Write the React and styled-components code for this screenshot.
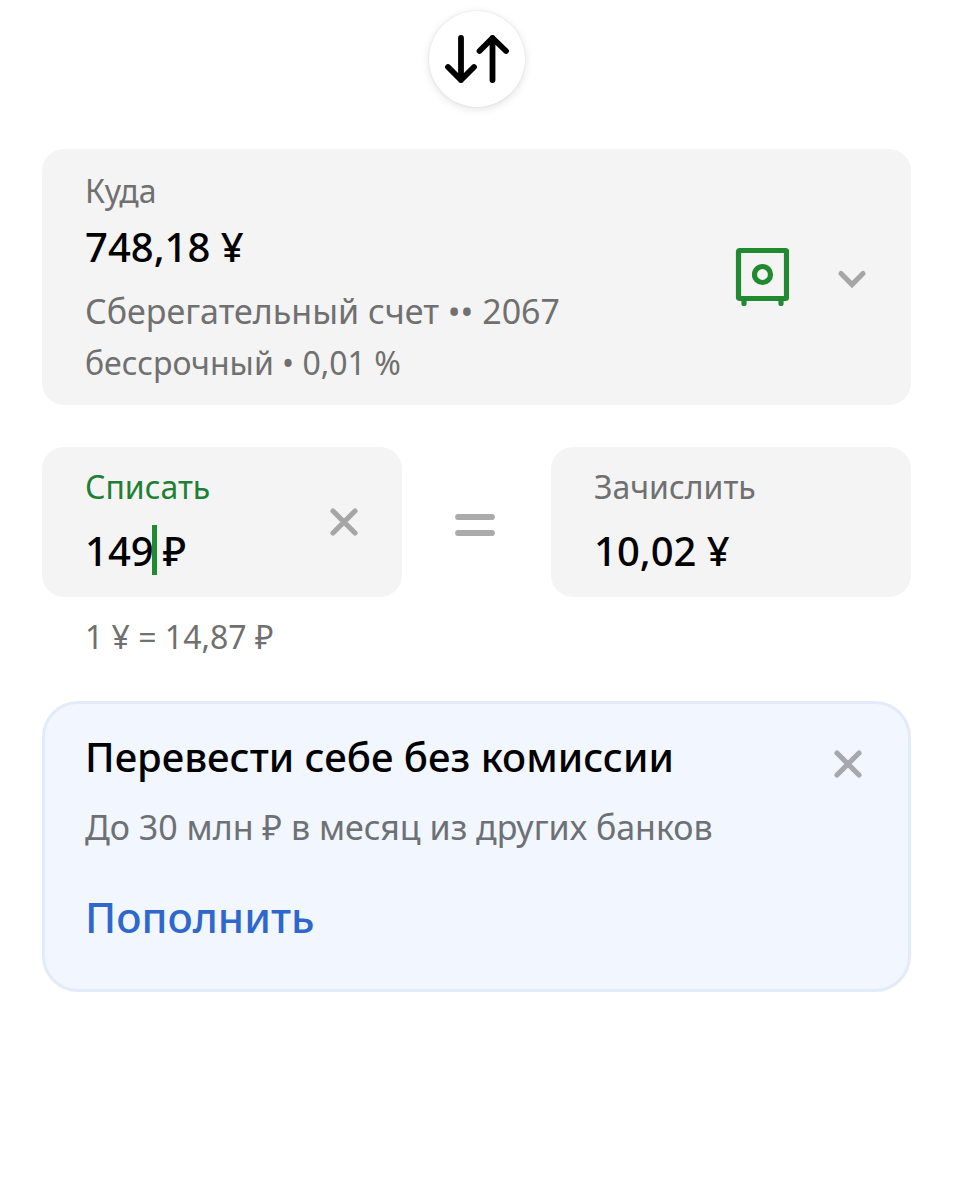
import { useState } from "react";
import styled, { createGlobalStyle } from "styled-components";

const GlobalStyle = createGlobalStyle`
    * {
        box-sizing: border-box;
    }

    body {
        margin: 0;
        background-color: #fff;
        font-family: "Noto Sans", "Open Sans", sans-serif;
        font-weight: 450;
    }

    button, input {
        font-family: inherit;
        font-weight: inherit;
        color: inherit;
        border: 0;
        padding: 0;
        background: none;
    }

    button {
        cursor: pointer;
    }

    svg {
        display: block;
    }
`;

const Page = styled.main`
    display: flex;
    flex-direction: column;
    padding: 11px 42px 42px;
`;

const SwapButton = styled.button`
    align-self: center;
    display: flex;
    align-items: center;
    justify-content: center;
    width: 96px;
    height: 96px;
    border-radius: 50%;
    background-color: #fff;
    box-shadow: 0 2px 8px rgba(0, 0, 0, 0.12), 0 0 2px rgba(0, 0, 0, 0.1);
`;

const AccountCard = styled.button`
    display: flex;
    align-items: center;
    width: 100%;
    margin-top: 42px;
    padding: 20px 42px 20px 43px;
    border-radius: 22px;
    background-color: #f4f4f4;
    text-align: left;
`;

const AccountInfo = styled.span`
    display: flex;
    flex-direction: column;
    flex: 1;
`;

const Label = styled.span`
    font-size: 32px;
    line-height: 44px;
    color: ${props => props.$active ? "#1f7f35" : "#707070"};
`;

const Balance = styled.span`
    font-size: 40px;
    font-weight: 500;
    line-height: 68px;
    color: #000;
`;

const AccountName = styled.span`
    font-size: 34px;
    line-height: 60px;
    color: #707070;
`;

const CardIcons = styled.span`
    display: flex;
    align-items: center;
    gap: 46px;
`;

const Exchange = styled.div`
    display: grid;
    grid-template-columns: 1fr 149px 1fr;
    align-items: center;
    margin-top: 42px;
`;

const Field = styled.div`
    display: flex;
    align-items: center;
    justify-content: space-between;
    padding: 18px 42px 22px 43px;
    border-radius: 22px;
    background-color: #f4f4f4;
`;

const FieldBody = styled.label`
    display: flex;
    flex-direction: column;
    gap: 16px;
    min-width: 0;
`;

const Amount = styled.span`
    display: flex;
    align-items: center;
    height: 50px;
    font-size: 40px;
    font-weight: 500;
    color: #000;
`;

const AmountInput = styled.input`
    field-sizing: content;
    max-width: 200px;
    height: 50px;
    font-size: 40px;
    font-weight: 500;
    outline: none;
    caret-color: transparent;
`;

const Caret = styled.span`
    width: 5px;
    height: 50px;
    margin: 0 6px 0 -2px;
    background-color: #21892f;
`;

const EqualSign = styled.span`
    justify-self: center;
`;

const Rate = styled.p`
    margin: 18px 43px 0;
    font-size: 32px;
    line-height: 44px;
    color: #707070;
`;

const Banner = styled.section`
    display: flex;
    align-items: flex-start;
    justify-content: space-between;
    margin-top: 42px;
    padding: 25px 44px 44px 40px;
    border: 3px solid #e2ebf9;
    border-radius: 36px;
    background-color: #f1f6ff;
`;

const BannerTitle = styled.h2`
    margin: 0;
    font-size: 40px;
    font-weight: 500;
    line-height: 56px;
    color: #000;
`;

const BannerText = styled.p`
    margin: 20px 0 40px;
    font-size: 34px;
    line-height: 44px;
    color: #6d7075;
`;

const BannerLink = styled.a`
    display: block;
    font-size: 42px;
    font-weight: 500;
    line-height: 56px;
    color: #2f68cd;
    text-decoration: none;
`;

const CloseButton = styled.button`
    margin-top: ${props => props.$top}px;
    color: ${props => props.$color || "#a6a6a6"};
`;

function SwapIcon() {
    return (
        <svg width="66" height="50" viewBox="0 0 66 50" fill="none" stroke="#000" strokeWidth="5.8" strokeLinecap="round" strokeLinejoin="round">
            <path d="M17 4V46M4 33L17 46L30 33" />
            <path d="M48.500 46V4M35.500 17L48.500 4L62 17" />
        </svg>
    );
}

function SafeIcon() {
    return (
        <svg width="54" height="60" viewBox="0 0 54 60" fill="none" stroke="#21892f" strokeWidth="5.2">
            <rect x="3.500" y="3.500" width="48" height="48" rx="1" />
            <circle cx="27.500" cy="27.500" r="8" />
            <path d="M9 52V56.500M46 52V56.500" strokeLinecap="round" />
        </svg>
    );
}

function ChevronIcon() {
    return (
        <svg width="34" height="24" viewBox="0 0 34 24" fill="none" stroke="#a6a6a6" strokeWidth="5.2" strokeLinecap="round">
            <path d="M6 8.500L17 19.500L28 8.500" />
        </svg>
    );
}

function CloseIcon() {
    return (
        <svg width="32" height="32" viewBox="0 0 32 32" fill="none" stroke="currentColor" strokeWidth="5.2" strokeLinecap="round">
            <path d="M5 5L27 27M27 5L5 27" />
        </svg>
    );
}

function EqualIcon() {
    return (
        <svg width="44" height="30" viewBox="0 0 44 30" fill="none" stroke="#ababab" strokeWidth="5.8" strokeLinecap="round">
            <path d="M3 10H37M3 26H37" />
        </svg>
    );
}

export default function App() {

    const [amount, setAmount] = useState("149");
    const [bannerVisible, setBannerVisible] = useState(true);

    return (
        <Page>
            <GlobalStyle />
            <SwapButton type="button" aria-label="Поменять счета местами">
                <SwapIcon />
            </SwapButton>

            <AccountCard type="button" aria-haspopup="listbox">
                <AccountInfo>
                    <Label>Куда</Label>
                    <Balance>748,18 ¥</Balance>
                    <AccountName>Сберегательный счет •• 2067</AccountName>
                    <Label>бессрочный • 0,01 %</Label>
                </AccountInfo>
                <CardIcons>
                    <SafeIcon />
                    <ChevronIcon />
                </CardIcons>
            </AccountCard>

            <Exchange>
                <Field>
                    <FieldBody>
                        <Label $active>Списать</Label>
                        <Amount>
                            <AmountInput inputMode="decimal" value={amount} onChange={e => setAmount(e.target.value)} />
                            <Caret />
                            ₽
                        </Amount>
                    </FieldBody>
                    <CloseButton type="button" aria-label="Очистить" $top={4} onClick={() => setAmount("")}>
                        <CloseIcon />
                    </CloseButton>
                </Field>
                <EqualSign>
                    <EqualIcon />
                </EqualSign>
                <Field>
                    <FieldBody>
                        <Label>Зачислить</Label>
                        <AmountInput readOnly value="10,02 ¥" />
                    </FieldBody>
                </Field>
            </Exchange>
            <Rate>1 ¥ = 14,87 ₽</Rate>

            {bannerVisible && (
                <Banner>
                    <div>
                        <BannerTitle>Перевести себе без комиссии</BannerTitle>
                        <BannerText>До 30 млн ₽ в месяц из других банков</BannerText>
                        <BannerLink href="#">Пополнить</BannerLink>
                    </div>
                    <CloseButton type="button" aria-label="Закрыть" $top={19} $color="#a5a8ae" onClick={() => setBannerVisible(false)}>
                        <CloseIcon />
                    </CloseButton>
                </Banner>
            )}
        </Page>
    );
}
